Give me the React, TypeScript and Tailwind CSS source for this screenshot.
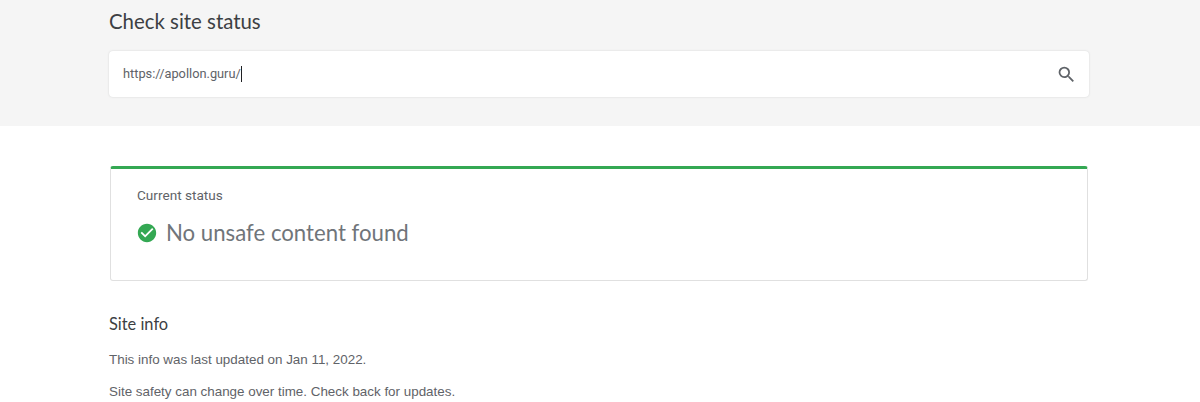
import React from "react";

const App = () => {
  return (
    <div className="w-[1200px] h-[402px] overflow-hidden bg-white font-['Liberation_Sans',Arial,sans-serif]">
      {/* Search header */}
      <div className="h-[126px] bg-[#f5f5f5] pl-[109px] pr-[111px] pt-[8px]">
        <h1 className="text-[20.4px] leading-[26px] text-[#3c4043] font-['Lato',sans-serif]">
          Check site status
        </h1>
        <div className="mt-[17px] flex h-[46px] items-center justify-between rounded-[4px] bg-white pl-[14px] pr-[12px] shadow-[0_0_2px_rgba(60,64,67,0.2)]">
          <div className="flex items-center">
            <span className="text-[12.8px] text-[#5f6368] font-['Roboto',sans-serif]">
              https://apollon.guru/
            </span>
            <span className="h-[16px] w-px bg-[#202124]" />
          </div>
          <svg viewBox="0 0 24 24" className="h-[21px] w-[21px]" fill="#5f6368">
            <path d="M15.5 14h-.79l-.28-.27A6.47 6.47 0 0 0 16 9.5 6.5 6.5 0 1 0 9.5 16c1.61 0 3.09-.59 4.23-1.57l.27.28v.79l5 4.99L20.49 19l-4.99-5zm-6 0C7.01 14 5 11.99 5 9.5S7.01 5 9.5 5 14 7.01 14 9.5 11.99 14 9.5 14z" />
          </svg>
        </div>
      </div>

      <div className="pl-[109px] pr-[111px] pt-[40px]">
        {/* Status card */}
        <div className="mx-px h-[115px] rounded-[3px] border border-t-[3px] border-[#e0e0e0] border-t-[#34a853] pl-[26px] pt-[17px]">
          <p className="text-[13.6px] leading-[18px] text-[#5f6368] font-['Roboto',sans-serif]">
            Current status
          </p>
          <div className="mt-[15px] -ml-px flex items-center gap-[8px]">
            <svg viewBox="0 0 24 24" className="h-[22px] w-[22px]" fill="#34a853">
              <path d="M12 2C6.48 2 2 6.48 2 12s4.48 10 10 10 10-4.48 10-10S17.52 2 12 2zm-2 15-5-5 1.41-1.41L10 14.17l7.59-7.59L19 8l-9 9z" />
            </svg>
            <span className="text-[22.2px] leading-[28px] text-[#70757a] font-['Lato',sans-serif]">
              No unsafe content found
            </span>
          </div>
        </div>

        {/* Site info */}
        <h2 className="mt-[33px] text-[16.4px] leading-[20px] text-[#3c4043] font-['Lato',sans-serif]">
          Site info
        </h2>
        <p className="mt-[18px] text-[13.4px] leading-[16px] text-[#5f6368]">
          This info was last updated on Jan 11, 2022.
        </p>
        <p className="mt-[16px] text-[13.4px] leading-[16px] text-[#5f6368]">
          Site safety can change over time. Check back for updates.
        </p>
      </div>
    </div>
  );
};

export default App;
